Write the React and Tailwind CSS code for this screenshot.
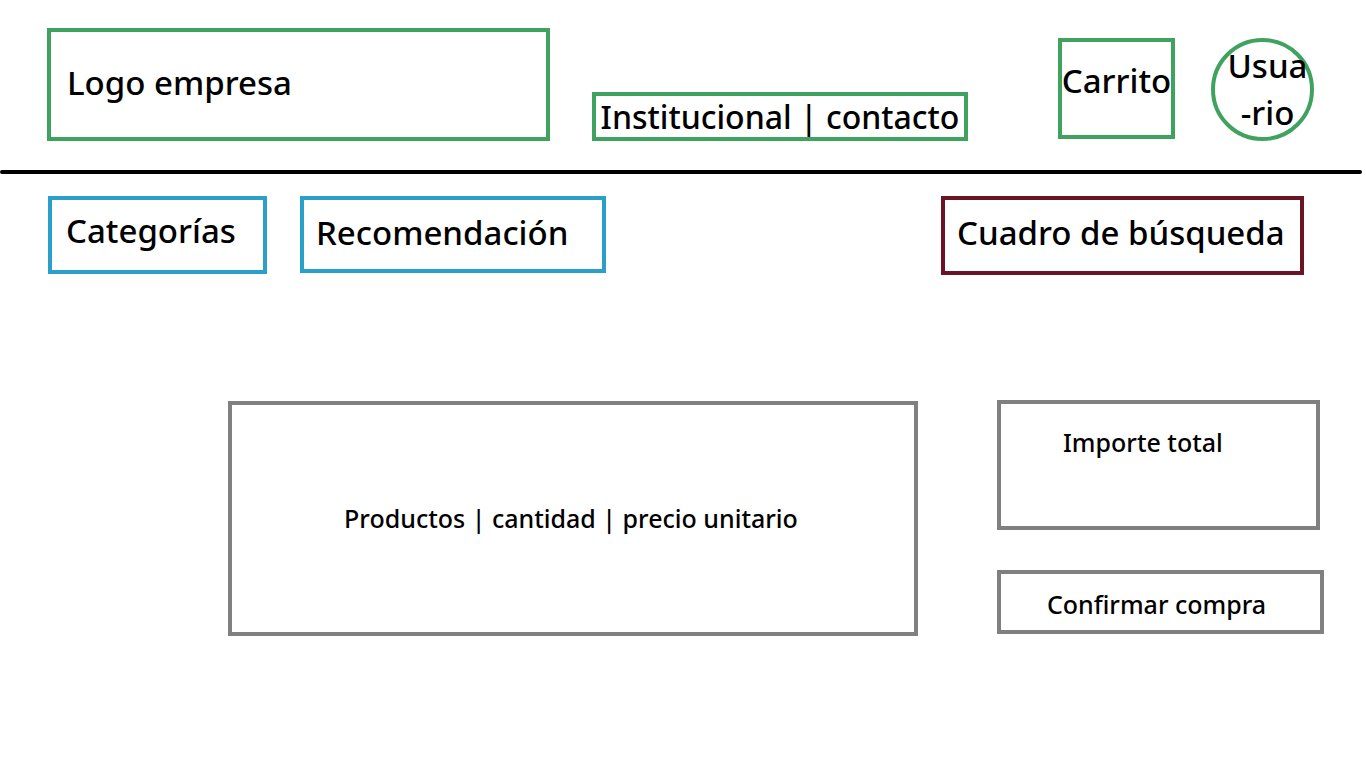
export default function App() {
  const font = { fontFamily: '"Noto Sans", "Open Sans", sans-serif' };
  return (
    <div className="w-[1366px] h-[768px] bg-white text-black overflow-hidden" style={font}>
      <div className="flex items-start">
        <div className="ml-[47px] mt-[28px] w-[503px] h-[113px] border-4 border-[#3fa35f] flex items-center pl-[16px] pb-[4px]">
          <span className="text-[33px] font-medium leading-none">Logo empresa</span>
        </div>
        <div className="ml-[42px] mt-[92px] w-[376px] h-[49px] border-4 border-[#3fa35f] flex items-center justify-center">
          <span className="text-[32px] font-medium leading-none whitespace-nowrap">Institucional | contacto</span>
        </div>
        <div className="ml-[90px] mt-[38px] w-[117px] h-[101px] border-4 border-[#3fa35f] flex items-center justify-center pb-[16px]">
          <span className="text-[33px] font-medium leading-none">Carrito</span>
        </div>
        <div className="ml-[36px] mt-[38px] w-[103px] h-[103px] border-4 border-[#3fa35f] rounded-full flex flex-col items-center justify-center leading-[47px] text-[33px] font-medium">
          <span className="pl-[10px] -mt-[2px]">Usua</span>
          <span className="pl-[10px]">-rio</span>
        </div>
      </div>
      <div className="mt-[29px] w-[1362px] h-[4px] bg-black rounded-full" />
      <div className="flex items-start mt-[22px]">
        <div className="ml-[48px] w-[219px] h-[78px] border-4 border-[#2a9fc9] flex items-center pl-[14px] pb-[9px]">
          <span className="text-[33px] font-medium leading-none">Categorías</span>
        </div>
        <div className="ml-[33px] w-[306px] h-[77px] border-4 border-[#2a9fc9] flex items-center pl-[12px] pb-[5px]">
          <span className="text-[33px] font-medium leading-none">Recomendación</span>
        </div>
        <div className="ml-[335px] w-[363px] h-[79px] border-4 border-[#6b1426] flex items-center pl-[12px] pb-[7px]">
          <span className="text-[33px] font-medium leading-none whitespace-nowrap">Cuadro de búsqueda</span>
        </div>
      </div>
      <div className="flex items-start mt-[125px]">
        <div className="ml-[228px] mt-[1px] w-[690px] h-[235px] border-4 border-[#808080] flex items-center justify-center pr-[4px]">
          <span className="text-[25px] font-medium leading-none">Productos | cantidad | precio unitario</span>
        </div>
        <div className="ml-[79px] flex flex-col">
          <div className="w-[323px] h-[130px] border-4 border-[#808080] pl-[62px] pt-[26px]">
            <span className="text-[25px] font-medium leading-none">Importe total</span>
          </div>
          <div className="mt-[40px] w-[327px] h-[64px] border-4 border-[#808080] flex items-center justify-center pr-[8px] pt-[4px]">
            <span className="text-[25px] font-medium leading-none">Confirmar compra</span>
          </div>
        </div>
      </div>
    </div>
  );
}
